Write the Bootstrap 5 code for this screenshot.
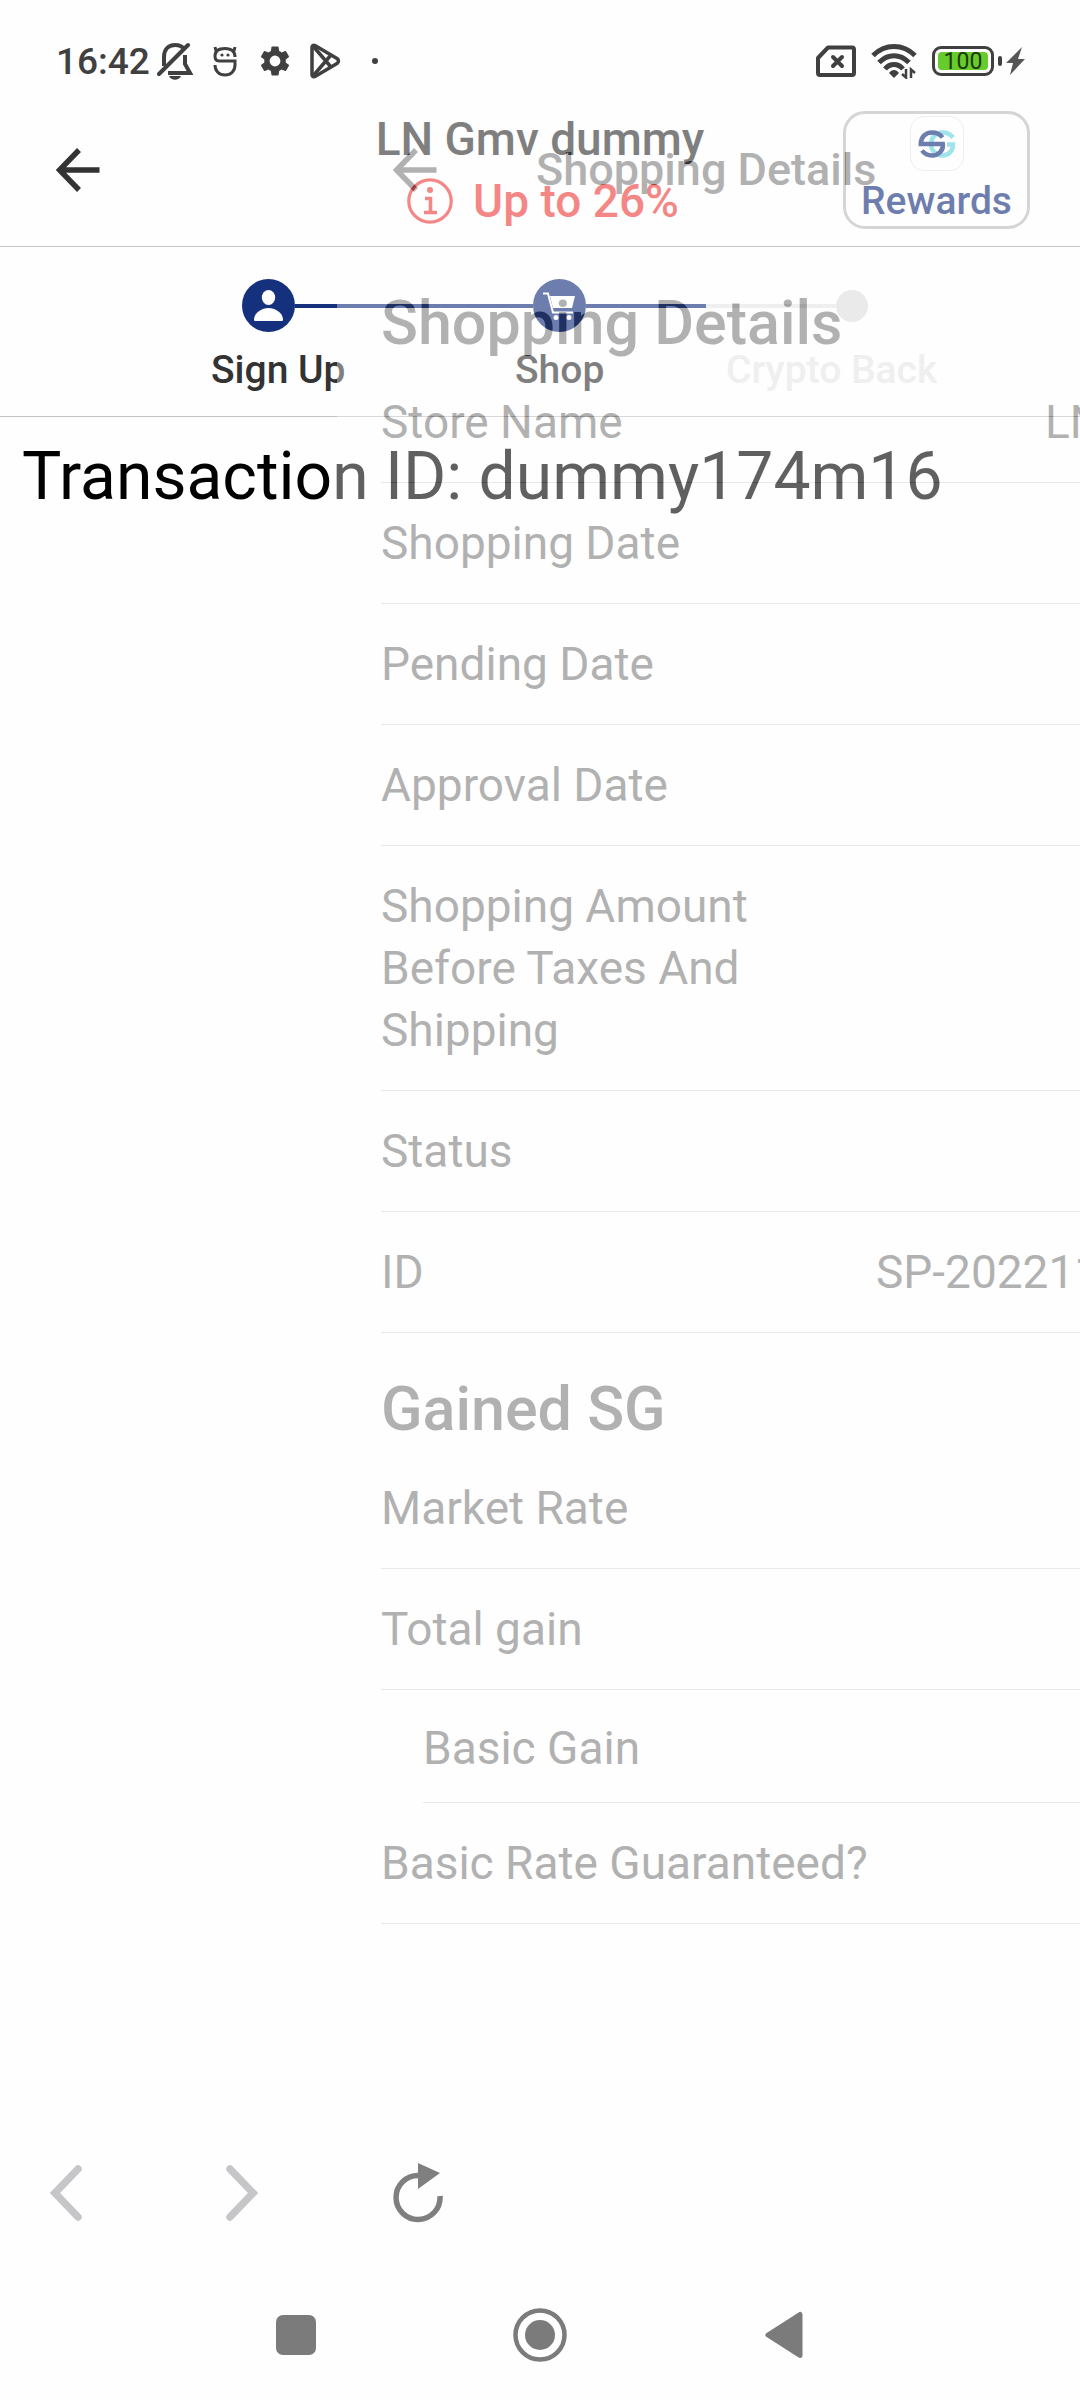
<!DOCTYPE html>
<html lang="en">
<head>
<meta charset="utf-8">
<meta name="viewport" content="width=device-width, initial-scale=1">
<title>Shopping Details</title>
<link rel="stylesheet" href="https://cdn.jsdelivr.net/npm/bootstrap@5.3.0/dist/css/bootstrap.min.css">
<style>
  body { font-family: Roboto, "Liberation Sans", sans-serif; color: #333; background: #fefefe; }
  svg { display: block; flex: none; }
  .app-shell { min-height: 100vh; }
  .plain-btn { border: 0; background: none; padding: 0; color: inherit; }

  /* system status bar */
  .status-bar { height: 94px; padding: 27px 55px 0 56px; color: #404040; z-index: 3; }
  .status-time { font-size: 37px; font-weight: 500; width: 94px; padding-top: 3px; }
  .status-cell { width: 50px; }
  .status-dot { width: 6px; height: 6px; background: #404040; }
  .status-right { gap: 15px; }
  .battery-box { width: 62px; height: 30px; border: 3px solid #404040; border-radius: 9px; padding: 3px; }
  .battery-level { background: #66cb2b; color: #1c3a0c; font-size: 23px; line-height: 20px; height: 18px; border-radius: 4px; }
  .battery-nub { width: 4px; height: 10px; background: #404040; border-radius: 2px; }

  /* screen headers */
  .screen-head { height: 153px; border-bottom: 1px solid #c6c6c6; padding: 0 50px; }
  .back-btn { margin-left: 6px; }
  .head-side { flex: 1 1 0; }
  .head-line { font-size: 46px; line-height: 62px; font-weight: 500; }
  .rate-line { color: #ee3f3c; gap: 20px; padding-left: 6px; }
  .rewards-btn { width: 187px; height: 118px; border: 3px solid #bcbcbc; border-radius: 22px; color: #15317e; font-size: 39px; font-weight: 500; line-height: 60px; }
  .logo-tile { width: 54px; height: 55px; border: 1px solid #e4e4e4; border-radius: 14px; margin-top: 2px; }

  /* progress steps */
  .steps-area { height: 170px; border-bottom: 1px solid #c3c3c3; padding-top: 32px; }
  .steps-track { margin: 0 212px 0 242px; }
  .step-disc { width: 53px; height: 53px; background: #15317e; }
  .step-dot { width: 32px; height: 32px; background: #dfdfdf; }
  .step-line { height: 4px; background: #e6e6e6; border-radius: 0; flex: 21 1 0; }
  .step-line.next { flex-grow: 22; }
  .step-line .progress-bar { background: #15317e; }
  .steps-names { display: grid; grid-template-columns: 304px 211px auto; margin-left: 211px; margin-top: 12px; font-size: 39px; font-weight: 500; line-height: 52px; }
  .step-off { color: #e7e7e7; }

  .transaction { font-size: 66px; line-height: 80px; color: #000; padding: 20px 22px; }

  /* browser toolbar and system keys */
  .web-tools { height: 134px; padding-left: 41px; gap: 126px; }
  .web-tools button { width: 50px; }
  .system-keys { height: 130px; gap: 190px; z-index: 3; color: #7b7b7b; margin-top: 10px; }

  /* screen sliding in over the first one */
  .incoming { top: 0; bottom: 0; left: 337px; width: 100%; opacity: .377; background: #fefefe; z-index: 2; padding-top: 94px; }
  .incoming .screen-head { gap: 99px; }
  .incoming .head-line { font-size: 45px; line-height: 64px; }
  .detail-body { padding: 0 44px; }
  .detail-title { font-size: 61px; line-height: 80px; font-weight: 500; margin: 0; padding-top: 36px; height: 115px; }
  .detail-row { font-size: 46px; line-height: 62px; padding: 29px 0; border-bottom: 1px solid #c9c9c9; }
  .detail-row dt { font-weight: 400; width: 400px; }
  .detail-row dt.wide { width: auto; }
  .detail-row dd { margin: 0; }
  .detail-row .id-value { width: 497px; }
  .detail-row.sub { margin-left: 42px; padding: 27px 0 23px; }
</style>
<script src="https://cdn.jsdelivr.net/npm/bootstrap@5.3.0/dist/js/bootstrap.bundle.min.js"></script>
</head>
<body>
<div class="app-shell position-relative overflow-hidden d-flex flex-column">

  <div class="status-bar position-relative d-flex align-items-center justify-content-between">
    <div class="d-flex align-items-center">
      <span class="status-time">16:42</span>
      <span class="status-cell d-flex justify-content-center">
        <svg width="36" height="38" viewBox="0 0 36 38" fill="none" stroke="currentColor" stroke-width="4"><path d="M7 24V15C7 8 11 3 18 3c4 0 7 1 9 4M28 13v9l5 9H11"/><path d="M2 32L31 3" stroke-linecap="round"/><path d="M12 34h12c-2 5-10 5-12 0z" fill="currentColor" stroke="none"/></svg>
      </span>
      <span class="status-cell d-flex justify-content-center">
        <svg width="24" height="32" viewBox="0 0 24 32" fill="none" stroke="currentColor" stroke-width="3"><path d="M22 12C22 6 18 3.500 12 3.500S2 6 2 11c0 3 1 5 4 5h16v4c0 6-4 10-10 10S2 26 2 20M3 6L2 2M21 6l1-4"/><circle cx="9" cy="10" r="1.600" fill="currentColor" stroke="none"/><circle cx="15" cy="10" r="1.600" fill="currentColor" stroke="none"/></svg>
      </span>
      <span class="status-cell d-flex justify-content-center">
        <svg width="36" height="36" viewBox="0 0 24 24" fill="currentColor"><path d="M19.14 12.94c.04-.3.06-.61.06-.94 0-.32-.02-.64-.07-.94l2.03-1.58a.49.49 0 0 0 .12-.61l-1.92-3.32a.49.49 0 0 0-.59-.22l-2.39.96a7 7 0 0 0-1.62-.94l-.36-2.54a.48.48 0 0 0-.48-.41h-3.84a.48.48 0 0 0-.47.41l-.36 2.54c-.59.24-1.13.57-1.62.94l-2.39-.96a.48.48 0 0 0-.59.22L2.74 8.87a.48.48 0 0 0 .12.61l2.03 1.58a7.5 7.5 0 0 0 0 1.88l-2.03 1.58a.49.49 0 0 0-.12.61l1.92 3.32c.12.22.37.29.59.22l2.39-.96c.5.38 1.03.7 1.62.94l.36 2.54c.05.24.24.41.48.41h3.84c.24 0 .44-.17.47-.41l.36-2.54a7 7 0 0 0 1.62-.94l2.39.96c.22.08.47 0 .59-.22l1.92-3.32a.48.48 0 0 0-.12-.61zM12 15.6a3.6 3.6 0 1 1 0-7.2 3.6 3.6 0 0 1 0 7.2z"/></svg>
      </span>
      <span class="status-cell d-flex justify-content-center">
        <svg width="32" height="36" viewBox="0 0 32 36" fill="none" stroke="currentColor" stroke-width="3.500" stroke-linejoin="round"><path d="M3 4c0-2 2-2 3-1.500L28 15.500c2 1.500 2 3.500 0 5L6 33.500c-1 .5-3 .5-3-1.500z"/><path d="M4 3l18 21M4 33l18-21"/></svg>
      </span>
      <span class="status-cell d-flex justify-content-center"><span class="status-dot rounded-circle"></span></span>
    </div>
    <div class="status-right d-flex align-items-center">
      <svg width="40" height="32" viewBox="0 0 40 32" fill="none" stroke="currentColor" stroke-width="4" stroke-linejoin="round"><path d="M12 2.500H36a2 2 0 0 1 2 2V28a2 2 0 0 1-2 2H4a2 2 0 0 1-2-2V13z"/><path d="M17 12l9 9M26 12l-9 9" stroke-linecap="round"/></svg>
      <svg width="46" height="36" viewBox="0 0 46 36" fill="none" stroke="currentColor" stroke-width="5"><path d="M2 12.500C14 .5 32 .5 44 12.500M8 19.500c9-9 21-9 30 0M14 26c5-6 13-6 18 0"/><path d="M18 30c3-4 7-4 10 0l-5 5z" fill="currentColor" stroke="none"/><path d="M35 26v8.500l-4-3.500M40 35v-8.500l4 3.500" stroke-width="2.500"/></svg>
      <div class="d-flex align-items-center gap-1">
        <div class="battery-box"><div class="battery-level text-center">100</div></div>
        <div class="battery-nub"></div>
        <svg width="19" height="30" viewBox="0 0 19 30" fill="#555"><path d="M16 1L0 17h7L4 29 19 13h-7z"/></svg>
      </div>
    </div>
  </div>

  <header class="screen-head d-flex align-items-center">
    <div class="head-side d-flex">
      <button class="plain-btn back-btn" type="button" aria-label="Back"><svg width="44" height="44" viewBox="0 0 44 44" fill="none" stroke="currentColor" stroke-width="5.500"><path d="M23 2L3.500 22 23 42M3 22h40.500"/></svg></button>
    </div>
    <div class="head-line d-flex flex-column align-items-center">
      <div>LN Gmv dummy</div>
      <div class="rate-line d-flex align-items-center">
        <svg width="46" height="46" viewBox="0 0 46 46" fill="none" stroke="currentColor"><circle cx="23" cy="23" r="21.200" stroke-width="3.200"/><circle cx="23" cy="12" r="3" fill="currentColor" stroke="none"/><path d="M18 20.500h5.500V34M17 34.500h13" stroke-width="3.500"/></svg>
        <span>Up to 26%</span>
      </div>
    </div>
    <div class="head-side d-flex justify-content-end">
      <button class="plain-btn rewards-btn d-flex flex-column align-items-center" type="button">
        <span class="logo-tile d-flex align-items-center justify-content-center flex-shrink-0">
          <svg width="38" height="28" viewBox="0 0 37 28" fill="none" stroke-width="4.500"><path stroke="#66d5df" d="M34.500 7.500C31 3 28 2.500 24 2.500 17 2.500 12.500 8 12.500 14s4.500 11.500 11.500 11.500c6 0 10.500-4.500 10.500-11h-6"/><path stroke="#15317e" d="M24 7.500c-3-4-7-5-10.500-5C7 2.500 2.300 7 2.300 14h22c1 6-4 11.500-10.800 11.500C9 25.500 6 24 3.500 20.500"/></svg>
        </span>
        <span>Rewards</span>
      </button>
    </div>
  </header>

  <section class="steps-area">
    <div class="steps-track d-flex align-items-center">
      <span class="step-disc rounded-circle d-flex align-items-center justify-content-center">
        <svg width="29" height="31" viewBox="0 0 29 31" fill="#fff"><ellipse cx="14.500" cy="7.500" rx="6.700" ry="7.500"/><path d="M1 31c-1 0-1-1-1-2 1-7 8-11 14.500-11S28 22 29 29c0 1 0 2-1 2z"/></svg>
      </span>
      <div class="progress step-line"><div class="progress-bar w-100"></div></div>
      <span class="step-disc rounded-circle d-flex align-items-center justify-content-center">
        <svg width="33" height="28" viewBox="0 0 33 28" fill="none" stroke="#fff" stroke-width="2"><path d="M0 1.500h5l5 19h20"/><path d="M7 4h25l-3 12H10z" fill="#fff" stroke="none"/><circle cx="13" cy="25.500" r="2.500" fill="#fff" stroke="none"/><circle cx="26" cy="25.500" r="2.500" fill="#fff" stroke="none"/></svg>
      </span>
      <div class="progress step-line next"><div class="progress-bar" style="width:48%"></div></div>
      <span class="step-dot rounded-circle"></span>
    </div>
    <div class="steps-names"><span>Sign Up</span><span>Shop</span><span class="step-off">Crypto Back</span></div>
  </section>

  <main class="transaction flex-grow-1">Transaction ID: dummy174m16</main>

  <div class="web-tools d-flex align-items-center">
    <button class="plain-btn d-flex justify-content-center" type="button" aria-label="Previous page"><svg width="34" height="56" viewBox="0 0 34 56" fill="none" stroke="#c6c6c8" stroke-width="7.500" stroke-linecap="round"><path d="M29 4L6 28l23 24"/></svg></button>
    <button class="plain-btn d-flex justify-content-center" type="button" aria-label="Next page"><svg width="34" height="56" viewBox="0 0 34 56" fill="none" stroke="#c6c6c8" stroke-width="7.500" stroke-linecap="round"><path d="M5 4l23 24L5 52"/></svg></button>
    <button class="plain-btn" type="button" aria-label="Reload"><svg width="50" height="60" viewBox="0 0 50 60" fill="none" stroke="currentColor" stroke-width="5.500"><path d="M26 12.500A22 22 0 1 0 47 33"/><path d="M25 0l22 10-22 16z" fill="currentColor" stroke="none"/></svg></button>
  </div>

  <nav class="system-keys position-relative d-flex align-items-center justify-content-center">
    <button class="plain-btn" type="button" aria-label="Recent apps"><svg width="54" height="54" viewBox="0 0 54 54" fill="currentColor"><rect x="7" y="7" width="40" height="40" rx="7"/></svg></button>
    <button class="plain-btn" type="button" aria-label="Home"><svg width="54" height="54" viewBox="0 0 54 54"><circle cx="27" cy="27" r="24.500" fill="none" stroke="currentColor" stroke-width="4.500"/><circle cx="27" cy="27" r="15" fill="currentColor"/></svg></button>
    <button class="plain-btn" type="button" aria-label="Back key"><svg width="54" height="54" viewBox="0 0 54 54" fill="currentColor" stroke="currentColor" stroke-width="5" stroke-linejoin="round"><path d="M43 6.500v41L11 27z"/></svg></button>
  </nav>

  <section class="incoming position-absolute">
    <header class="screen-head d-flex align-items-center">
      <button class="plain-btn back-btn" type="button" aria-label="Back"><svg width="44" height="44" viewBox="0 0 44 44" fill="none" stroke="currentColor" stroke-width="5.500"><path d="M23 2L3.500 22 23 42M3 22h40.500"/></svg></button>
      <span class="head-line">Shopping Details</span>
    </header>
    <div class="detail-body">
      <h2 class="detail-title">Shopping Details</h2>
      <dl class="m-0">
        <div class="detail-row d-flex justify-content-between"><dt>Store Name</dt><dd>LN Gmv dummy</dd></div>
        <div class="detail-row"><dt>Shopping Date</dt></div>
        <div class="detail-row"><dt>Pending Date</dt></div>
        <div class="detail-row"><dt>Approval Date</dt></div>
        <div class="detail-row"><dt>Shopping Amount Before Taxes And Shipping</dt></div>
        <div class="detail-row"><dt>Status</dt></div>
        <div class="detail-row d-flex justify-content-between"><dt>ID</dt><dd class="id-value">SP-202211</dd></div>
      </dl>
      <h2 class="detail-title">Gained SG</h2>
      <dl class="m-0">
        <div class="detail-row"><dt>Market Rate</dt></div>
        <div class="detail-row"><dt>Total gain</dt></div>
        <div class="detail-row sub"><dt>Basic Gain</dt></div>
        <div class="detail-row"><dt class="wide">Basic Rate Guaranteed?</dt></div>
      </dl>
    </div>
  </section>
</div>
</body>
</html>
